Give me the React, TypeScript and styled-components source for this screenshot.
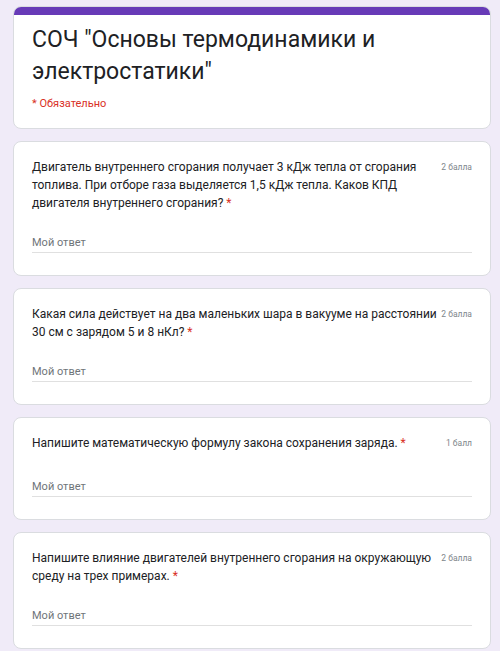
import React, { FC } from 'react';
import styled, { createGlobalStyle } from 'styled-components';

const GlobalStyle = createGlobalStyle`
  html, body {
    margin: 0;
    padding: 0;
    background: #f0ebf8;
  }
  body {
    font-family: Roboto, "Noto Sans", sans-serif;
    color: #202124;
  }
`;

const Page = styled.div`
  display: flex;
  flex-direction: column;
  gap: 12px;
  padding: 6px 9px 6px 13px;
  width: 478px;
`;

const Card = styled.div`
  background: #fff;
  border: 1px solid #dadce0;
  border-radius: 8px;
  overflow: hidden;
`;

const HeaderBar = styled.div`
  height: 8px;
  background: #673ab7;
`;

const HeaderBody = styled.div`
  padding: 9px 18px 16px 18px;
`;

const Title = styled.h1`
  margin: 0;
  font-size: 23px;
  line-height: 32px;
  font-weight: 400;
  color: #202124;
`;

const RequiredNote = styled.div`
  margin-top: 8px;
  font-size: 11px;
  line-height: 16px;
  color: #d93025;
`;

const QuestionBody = styled.div`
  padding: 16px 18px 22px 18px;
`;

const QuestionHead = styled.div`
  display: flex;
  align-items: flex-start;
  gap: 2px;
  min-height: 22px;
`;

const QuestionText = styled.div`
  flex: 1;
  font-size: 12px;
  line-height: 18px;
  color: #202124;
`;

const Star = styled.span`
  color: #d93025;
`;

const Points = styled.div`
  flex: none;
  font-size: 8.5px;
  line-height: 18px;
  color: #80868b;
  white-space: nowrap;
`;

const Answer = styled.div`
  margin-top: 21px;
  font-size: 11px;
  line-height: 19px;
  color: #70757a;
  border-bottom: 1px solid #e0e0e0;
`;

interface IQuestion {
  text: string;
  points: string;
}

const Question: FC<IQuestion> = ({ text, points }) => (
  <Card>
    <QuestionBody>
      <QuestionHead>
        <QuestionText>
          {text} <Star>*</Star>
        </QuestionText>
        <Points>{points}</Points>
      </QuestionHead>
      <Answer>Мой ответ</Answer>
    </QuestionBody>
  </Card>
);

const questions: IQuestion[] = [
  {
    text: 'Двигатель внутреннего сгорания получает 3 кДж тепла от сгорания топлива. При отборе газа выделяется 1,5 кДж тепла. Каков КПД двигателя внутреннего сгорания?',
    points: '2 балла',
  },
  {
    text: 'Какая сила действует на два маленьких шара в вакууме на расстоянии 30 см с зарядом 5 и 8 нКл?',
    points: '2 балла',
  },
  {
    text: 'Напишите математическую формулу закона сохранения заряда.',
    points: '1 балл',
  },
  {
    text: 'Напишите влияние двигателей внутреннего сгорания на окружающую среду на трех примерах.',
    points: '2 балла',
  },
];

const App: FC = () => (
  <>
    <GlobalStyle />
    <Page>
      <Card>
        <HeaderBar />
        <HeaderBody>
          <Title>СОЧ "Основы термодинамики и электростатики"</Title>
          <RequiredNote>* Обязательно</RequiredNote>
        </HeaderBody>
      </Card>
      {questions.map(q => (
        <Question key={q.text} text={q.text} points={q.points} />
      ))}
    </Page>
  </>
);

export default App;
